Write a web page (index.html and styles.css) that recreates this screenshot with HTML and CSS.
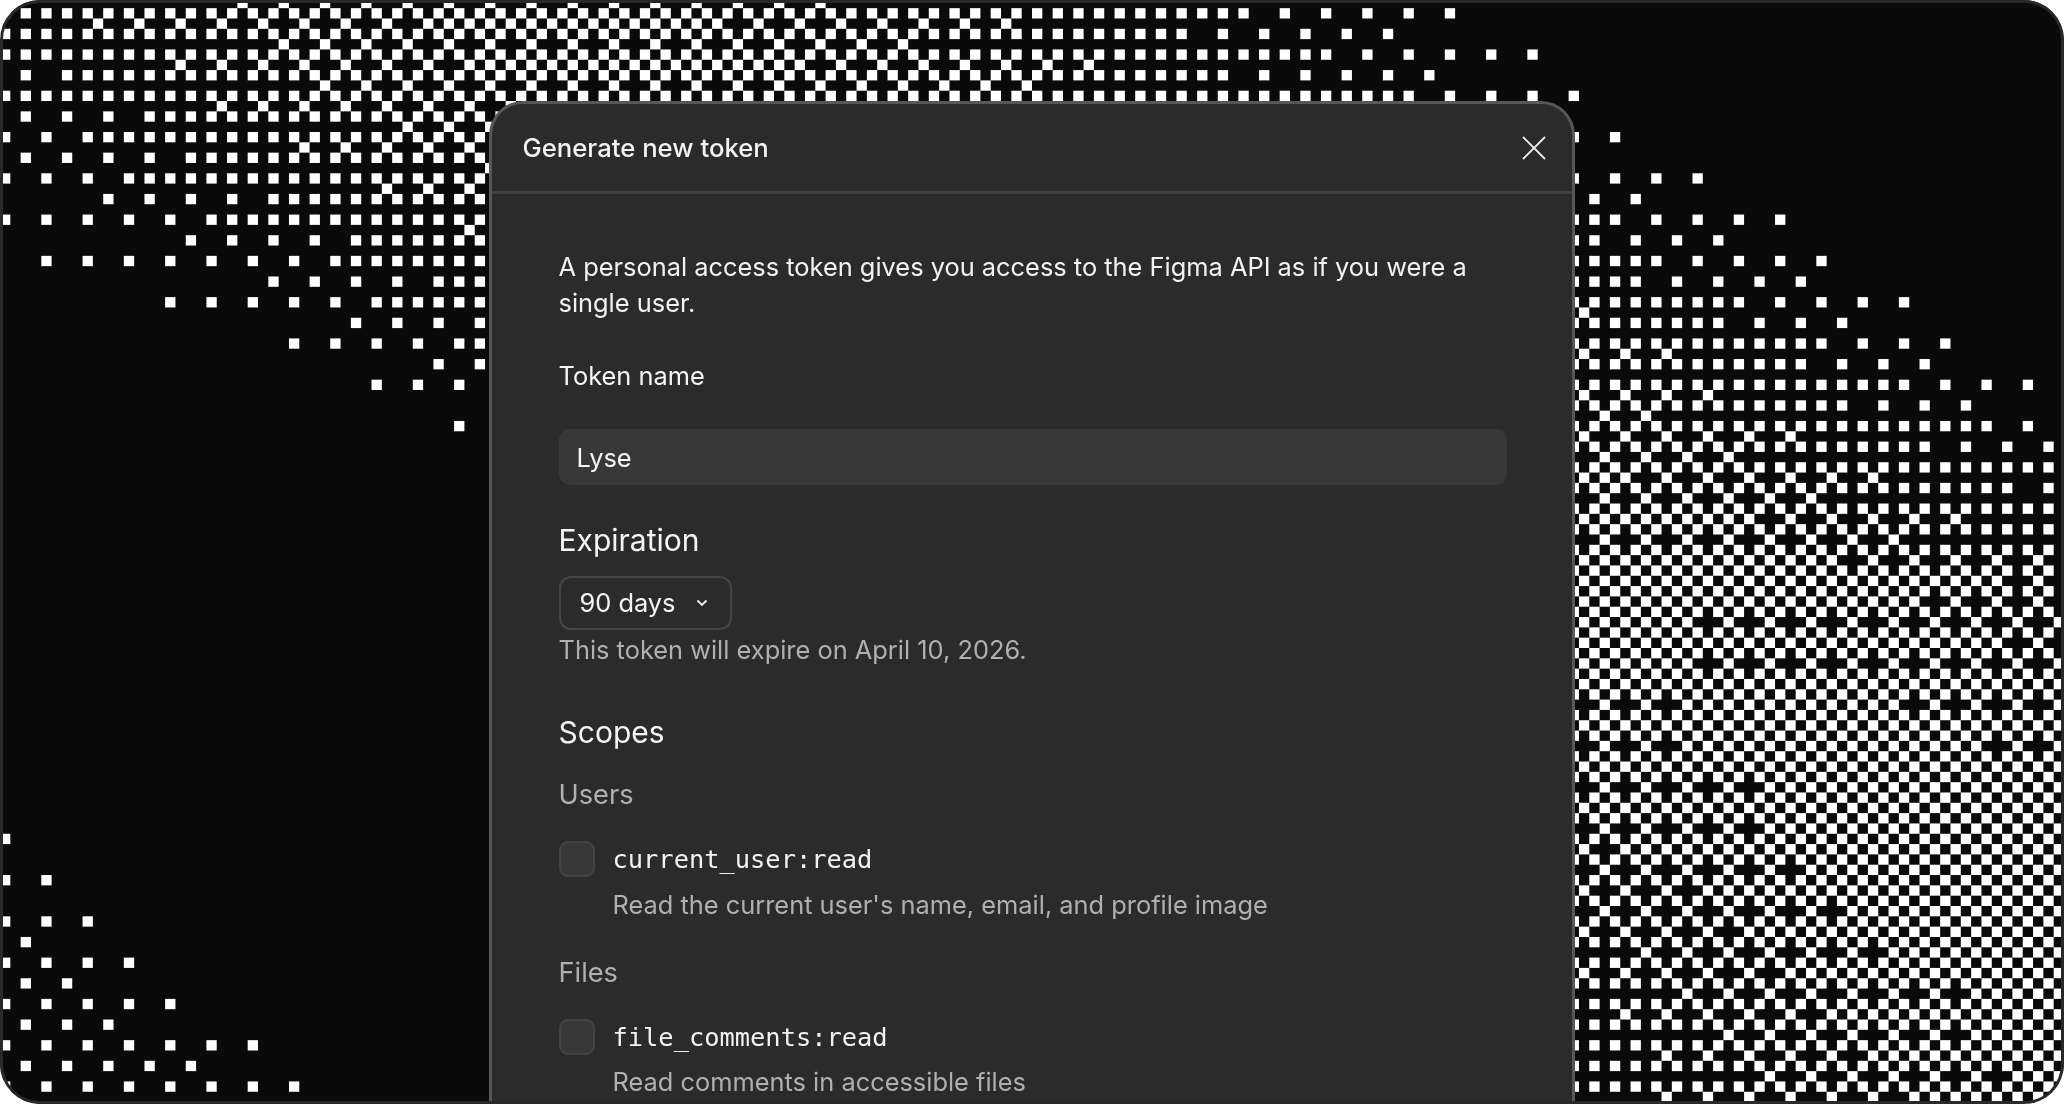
FILE: index.html
```html
<!DOCTYPE html>
<html lang="en">
<head>
<meta charset="utf-8">
<title>Generate new token</title>
<link rel="stylesheet" href="styles.css">
</head>
<body>
<main class="frame">
  <canvas class="dither" id="dither" width="2064" height="1104"></canvas>
  <section class="dialog">
    <header class="dialog-head">
      <h1 class="dialog-title">Generate new token</h1>
      <svg class="close" viewBox="0 0 24 24" aria-label="Close"><path d="M1 1 23 23M23 1 1 23"/></svg>
    </header>
    <div class="dialog-body">
      <p class="intro">A personal access token gives you access to the Figma API as if you were a single user.</p>
      <label class="field-label">Token name</label>
      <div class="input">Lyse</div>
      <h2 class="section-title expiration">Expiration</h2>
      <div class="select"><span>90 days</span>
        <svg class="chevron" viewBox="0 0 12 8"><path d="M1.5 1.5 6 6l4.5-4.5"/></svg>
      </div>
      <p class="hint">This token will expire on April 10, 2026.</p>
      <h2 class="section-title scopes">Scopes</h2>
      <h3 class="group">Users</h3>
      <div class="scope">
        <span class="check"></span>
        <code class="scope-name">current_user:read</code>
      </div>
      <p class="scope-desc">Read the current user's name, email, and profile image</p>
      <h3 class="group">Files</h3>
      <div class="scope">
        <span class="check"></span>
        <code class="scope-name">file_comments:read</code>
      </div>
      <p class="scope-desc">Read comments in accessible files</p>
    </div>
  </section>
</main>
<script src="dither.js"></script>
</body>
</html>
```
FILE: styles.css
```css
* { box-sizing: border-box; }
html, body { margin: 0; padding: 0; background: #fff; }
body { width: 2064px; height: 1104px; overflow: hidden; font-family: Inter, "Noto Sans", sans-serif; color: #f5f5f5; }

.frame {
  position: relative;
  width: 2064px;
  height: 1104px;
  border-radius: 40px;
  overflow: hidden;
  background: #0a0a0a;
  display: flex;
  justify-content: center;
  align-items: stretch;
  padding-top: 101px;
}
.frame::after {
  content: "";
  position: absolute;
  inset: 0;
  border: 3px solid #292929;
  border-radius: 40px;
  pointer-events: none;
}
.dither { position: absolute; left: 0; top: 0; }

.dialog {
  position: relative;
  width: 1086px;
  flex-shrink: 0;
  overflow: hidden;
  background: #2b2b2b;
  border: 3px solid #575757;
  border-bottom: 0;
  border-radius: 34px 34px 0 0;
}
.dialog-head {
  height: 90px;
  padding: 0 26px 0 30.5px;
  display: flex;
  align-items: center;
  justify-content: space-between;
  border-bottom: 3px solid #404040;
}
.dialog-title { margin: 0; font-size: 25.7px; line-height: 36px; font-weight: 500; color: #f2f2f2; }
.close { width: 24px; height: 24px; fill: none; stroke: #eeeeee; stroke-width: 1.8; }

.dialog-body { padding: 55px 65px 0 66.5px; }
.intro { margin: 0; font-size: 25.4px; line-height: 36px; color: #f2f2f2; }
.field-label { display: block; margin-top: 37px; font-size: 25.4px; line-height: 36px; }
.input {
  margin-top: 35px;
  height: 56px;
  padding: 0 18px;
  display: flex;
  align-items: center;
  background: #383838;
  border-radius: 11px;
  font-size: 25.4px;
}
.section-title { margin: 0; font-size: 30px; line-height: 40px; font-weight: 400; }
.expiration { margin-top: 34.5px; }
.select {
  margin-top: 16px;
  width: 173px;
  height: 54px;
  padding: 0 22px 0 19px;
  display: flex;
  align-items: center;
  justify-content: space-between;
  border: 2px solid #454545;
  border-radius: 12px;
  font-size: 25.4px;
}
.chevron { width: 12px; height: 8px; fill: none; stroke: #f2f2f2; stroke-width: 1.8; }
.hint { margin: 2.5px 0 0; font-size: 25.4px; line-height: 36px; color: #b0b0b0; }
.scopes { margin-top: 43.5px; }
.group { margin: 23.5px 0 0; font-size: 27.2px; line-height: 40px; font-weight: 400; color: #b0b0b0; }
.scope { margin-top: 26px; display: flex; align-items: center; gap: 18px; }
.check { width: 36px; height: 36px; flex-shrink: 0; background: #383838; border: 2px solid #434343; border-radius: 9px; }
.scope-name { font-family: "DejaVu Sans Mono", "Liberation Mono", monospace; font-size: 25.4px; line-height: 36px; color: #f2f2f2; }
.scope-desc { margin: 9.5px 0 0 54px; font-size: 25.4px; line-height: 36px; color: #b0b0b0; }
.scope-desc + .group { margin-top: 30px; }
```
FILE: dither.js
```js
// Ordered dither on a 200 x 107 cell grid. Each threshold rank has the span of
// columns in which it is lit, given as knots along the rows.
var CELL = 10.32, OFFSET_Y = -2.16;

var RANK_AT = {
  "0,1": 0, "2,3": 1, "2,1": 2, "0,3": 3,
  "1,2": 4, "3,0": 5, "3,2": 6, "1,0": 7
};

var BANDS = {
  0: [
    { lo: [[21,-10],[25,4],[29,16],[33,28],[37,36],[41,44],[105,100]],
      hi: [[1,140],[5,148],[9,152],[13,156],[17,164],[21,172],[25,176],[29,184],[33,188],[37,196],[41,196],[45,210]] },
    { lo: [[0,-10]],
      hi: [[77,-5],[81,0],[85,4],[89,8],[93,12],[97,16],[101,24],[105,28]] }
  ],
  1: [
    { lo: [[11,-10],[15,2],[19,10],[23,18],[27,26],[31,34],[35,42],[39,50],[107,110]],
      hi: [[3,134],[7,138],[19,158],[23,166],[27,174],[31,178],[35,186],[39,190],[43,198],[47,210]] },
    { lo: [[0,-10]],
      hi: [[87,-5],[91,2],[95,6],[99,10],[103,18],[107,22]] }
  ],
  2: [
    { lo: [[5,-10],[9,2],[13,10],[17,14],[21,22],[25,34],[29,38],[33,46],[37,54],[105,130]],
      hi: [[1,118],[5,126],[9,134],[21,154],[25,158],[29,166],[33,174],[37,182],[41,190],[45,210]] }
  ],
  3: [
    { lo: [[3,0],[7,8],[11,16],[15,20],[19,28],[23,36],[27,44],[31,52],[105,150]],
      hi: [[3,112],[7,116],[23,152],[27,156],[31,164],[35,172],[39,176],[43,184],[47,192],[51,210]] }
  ],
  4: [
    { lo: [[2,9],[6,17],[10,21],[14,29],[18,37],[22,45],[26,53],[90,148],[98,157],[102,161],[106,161]],
      hi: [[2,97],[6,105],[30,153],[34,161],[38,165],[42,173],[46,181],[50,189],[54,197],[58,205],[62,213]] }
  ],
  5: [
    { lo: [[0,23],[4,27],[8,31],[12,39],[16,47],[90,155],[104,169]],
      hi: [[0,79],[4,87],[8,99],[40,159],[44,167],[48,175],[52,183],[56,191],[60,199],[64,207],[68,215]] }
  ],
  6: [
    { lo: [[2,43],[6,47],[10,51],[78,140],[82,156],[86,164],[90,168],[94,172],[98,176],[102,180],[106,184]],
      hi: [[2,67],[6,75],[46,155],[50,167],[58,183],[62,191],[66,199],[70,207],[74,215]] }
  ],
  7: [
    { lo: [[64,100],[68,162],[72,162],[76,170],[80,170],[84,174],[88,178],[92,182],[96,190],[100,190],[104,194]],
      hi: [[52,-1],[56,215],[60,161],[64,161],[68,181],[72,189],[76,215]] }
  ]
};

function at(knots, j) {
  if (j <= knots[0][0]) return knots[0][1];
  for (var k = 1; k < knots.length; k++) {
    if (j <= knots[k][0]) {
      var a = knots[k - 1], b = knots[k];
      return a[1] + (b[1] - a[1]) * (j - a[0]) / (b[0] - a[0]);
    }
  }
  return knots[knots.length - 1][1];
}

function lit(i, j) {
  var rank = RANK_AT[(i & 3) + "," + (j & 3)];
  if (rank === undefined) return false;
  return BANDS[rank].some(function (band) {
    return i >= at(band.lo, j) && i <= at(band.hi, j);
  });
}

var ctx = document.getElementById("dither").getContext("2d");
ctx.fillStyle = "#ffffff";
for (var j = 0; j < 108; j++) {
  for (var i = 0; i < 200; i++) {
    if (lit(i, j)) ctx.fillRect(i * CELL, OFFSET_Y + j * CELL, CELL, CELL);
  }
}
```
